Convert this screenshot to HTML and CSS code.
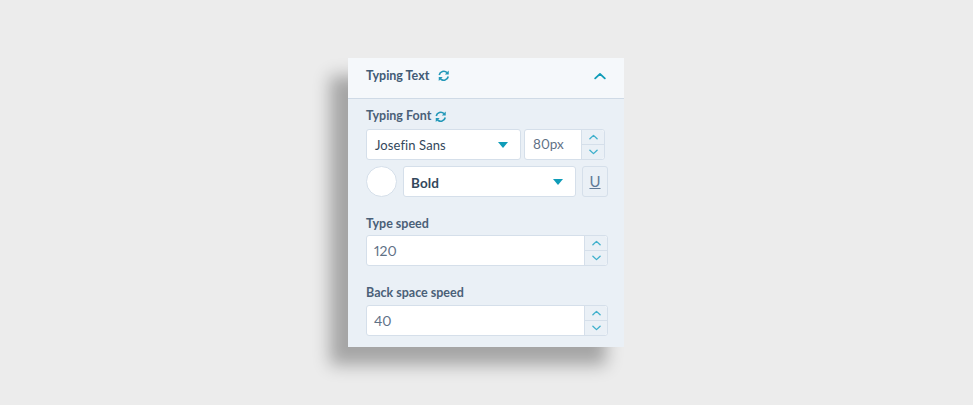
FILE: index.html
```html
<!DOCTYPE html>
<html lang="en">
<head>
<meta charset="utf-8">
<title>Typing Text</title>
<link rel="stylesheet" href="styles.css">
</head>
<body>
<svg class="defs" width="0" height="0" aria-hidden="true">
  <symbol id="sync" viewBox="0 0 12 12">
    <path d="M1.3 5.2A4.8 4.8 0 0 1 9.4 2.7" fill="none" stroke="currentColor" stroke-width="1.7"/>
    <path d="M11.2 0.6V4.7H7.1Z" fill="currentColor"/>
    <path d="M10.7 6.8A4.8 4.8 0 0 1 2.6 9.3" fill="none" stroke="currentColor" stroke-width="1.7"/>
    <path d="M0.8 11.4V7.3H4.9Z" fill="currentColor"/>
  </symbol>
  <symbol id="up" viewBox="0 0 10 6"><path d="M1 5L5 1.2L9 5" fill="none" stroke="currentColor" stroke-width="1.5" stroke-linecap="round" stroke-linejoin="round"/></symbol>
  <symbol id="down" viewBox="0 0 10 6"><path d="M1 1L5 4.8L9 1" fill="none" stroke="currentColor" stroke-width="1.5" stroke-linecap="round" stroke-linejoin="round"/></symbol>
</svg>
<main class="panel">
  <header class="head">
    <h2 class="head-title">Typing Text</h2>
    <svg class="sync sync-head"><use href="#sync"/></svg>
    <svg class="collapse"><use href="#up"/></svg>
  </header>
  <div class="body">
    <div class="label label-font">Typing Font <svg class="sync"><use href="#sync"/></svg></div>
    <div class="row row-font">
      <div class="select select-font"><span class="select-text">Josefin Sans</span><i class="caret"></i></div>
      <div class="number number-size">
        <span class="value">80px</span>
        <div class="stepper"><span class="step"><svg class="chev"><use href="#up"/></svg></span><span class="step"><svg class="chev"><use href="#down"/></svg></span></div>
      </div>
    </div>
    <div class="row row-style">
      <div class="swatch"></div>
      <div class="select select-weight"><span class="select-text bold">Bold</span><i class="caret"></i></div>
      <div class="underline">U</div>
    </div>
    <div class="label label-speed">Type speed</div>
    <div class="number number-wide">
      <span class="value">120</span>
      <div class="stepper"><span class="step"><svg class="chev"><use href="#up"/></svg></span><span class="step"><svg class="chev"><use href="#down"/></svg></span></div>
    </div>
    <div class="label label-back">Back space speed</div>
    <div class="number number-wide">
      <span class="value">40</span>
      <div class="stepper"><span class="step"><svg class="chev"><use href="#up"/></svg></span><span class="step"><svg class="chev"><use href="#down"/></svg></span></div>
    </div>
  </div>
</main>
</body>
</html>
```
FILE: styles.css
```css
* { box-sizing: border-box; }
html, body { margin: 0; height: 100%; }
body {
  background: #ececec;
  font-family: "Lato", "Noto Sans", sans-serif;
  color: #33475b;
  overflow: hidden;
  padding: 58px 0 0 348px;
}
.defs { display: block; height: 0; }
.panel {
  width: 276px;
  height: 289px;
  background: #eaf0f6;
  box-shadow: -18px 18px 16px rgba(0, 0, 0, 0.3);
}
.head {
  height: 41px;
  display: flex;
  align-items: center;
  padding: 0 18px 5px;
  background: #f5f8fb;
  border-bottom: 1px solid #cfdae6;
}
.head-title { margin: 0; font-size: 12.5px; line-height: 16px; font-weight: 700; color: #425b76; }
.sync { width: 11.5px; height: 11.5px; color: #2398b8; vertical-align: -2px; margin-left: 1px; flex: none; }
.sync-head { margin-left: 9px; }
.collapse { width: 12px; height: 8px; color: #0f9cb8; margin-left: auto; }
.body { padding: 9px 18px 0; }
.label { font-size: 12.5px; font-weight: 700; color: #4a6078; line-height: 16px; }
.row { display: flex; }
.row-font { margin-top: 5px; gap: 3px; }
.row-style { margin-top: 6px; gap: 6px; width: 242px; }
.select {
  height: 31px;
  flex: none;
  background: #fff;
  border: 1px solid #d5dfea;
  border-radius: 3px;
  display: flex;
  align-items: center;
  justify-content: space-between;
  padding: 0 12px 0 8px;
  font-size: 13px;
  letter-spacing: 0.1px;
  color: #33475b;
}
.select-font { width: 155px; }
.select-weight { width: 173px; padding-left: 7px; }
.bold { font-weight: 700; font-size: 13.5px; padding-top: 2px; }
.caret {
  width: 0;
  height: 0;
  border-left: 5.5px solid transparent;
  border-right: 5.5px solid transparent;
  border-top: 6px solid #0f9cb8;
}
.number {
  height: 31px;
  display: flex;
  background: #fff;
  border: 1px solid #d5dfea;
  border-radius: 3px;
  font-size: 14px;
  color: #5f7186;
}
.number-size { width: 81px; }
.number-wide { width: 242px; margin-top: 4px; }
.value { flex: 1; padding-left: 7px; line-height: 29px; font-feature-settings: "pnum"; }
.number-size .value { padding-left: 8px; font-size: 13.5px; }
.stepper {
  width: 23px;
  flex: none;
  display: flex;
  flex-direction: column;
  background: #eaf0f6;
  border-left: 1px solid #d5dfea;
  border-radius: 0 3px 3px 0;
}
.step { flex: 1; display: flex; align-items: center; justify-content: center; }
.step + .step { border-top: 1px solid #d5dfea; }
.chev { width: 9px; height: 6px; color: #3fb0cc; }
.swatch {
  width: 31px;
  height: 31px;
  flex: none;
  background: #fff;
  border: 1px solid #d5dfea;
  border-radius: 50%;
}
.underline {
  width: 26px;
  height: 31px;
  flex: none;
  border: 1px solid #d5dfea;
  border-radius: 3px;
  text-align: center;
  line-height: 29px;
  font-size: 15px;
  color: #5f7a98;
  text-decoration: underline;
}
.label-speed { margin-top: 19px; margin-bottom: -1px; }
.label-back { margin-top: 19px; }
```
